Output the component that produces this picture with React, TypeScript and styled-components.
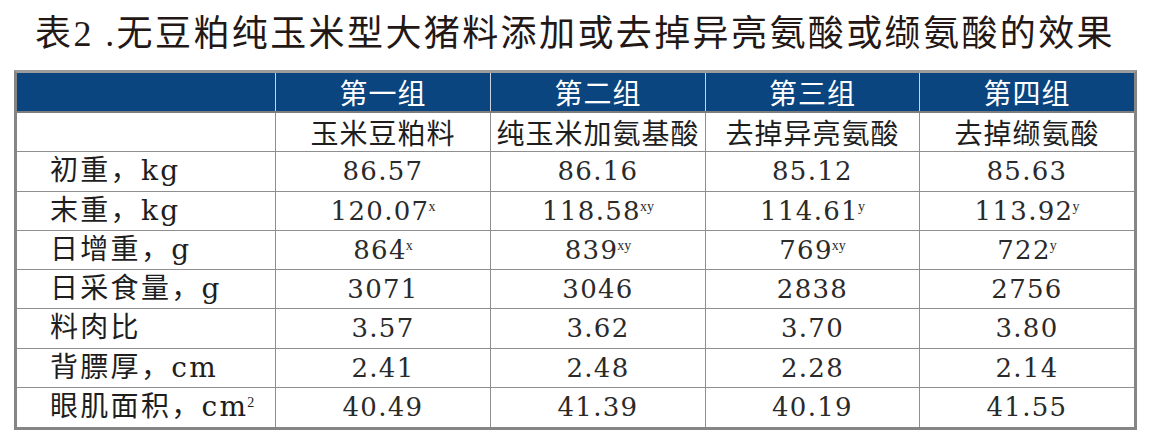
import React from 'react'
import styled, { createGlobalStyle } from 'styled-components'

const GlobalStyle = createGlobalStyle`
  html, body {
    margin: 0;
    padding: 0;
    background: #ffffff;
  }
  body {
    width: 1151px;
    height: 443px;
    overflow: hidden;
  }
`

const COLS = '259px 215px 215px 214px 214px'

const Page = styled.div`
  display: flex;
  flex-direction: column;
  align-items: flex-start;
  padding: 14px 0 0 14px;
`

const Title = styled.h1`
  margin: 0 0 16px 21px;
  font-family: 'Liberation Serif', 'Noto Sans CJK SC', serif;
  font-size: 36px;
  font-weight: 400;
  line-height: 40px;
  letter-spacing: 2.4px;
  color: #231815;
  white-space: nowrap;
`

const Table = styled.div`
  display: flex;
  flex-direction: column;
  width: 1117px;
  border: 3px solid #858585;
  border-top-color: #9c9c9c;
`

const Row = styled.div<{ $head?: boolean; $last?: boolean }>`
  display: grid;
  grid-template-columns: ${COLS};
  box-sizing: border-box;
  height: ${(p) => (p.$head ? '40px' : '39.25px')};
  background: ${(p) => (p.$head ? '#0b4580' : '#ffffff')};
  border-bottom: ${(p) =>
    p.$head ? '2px solid #7d7d7d' : p.$last ? 'none' : '1px solid #8f8f8f'};
`

const Cell = styled.div<{ $head?: boolean; $left?: boolean }>`
  display: flex;
  align-items: center;
  justify-content: ${(p) => (p.$left ? 'flex-start' : 'center')};
  padding-left: ${(p) => (p.$left ? '33px' : '0')};
  border-right: 1px solid ${(p) => (p.$head ? '#c9d2de' : '#8f8f8f')};
  color: ${(p) => (p.$head ? '#ffffff' : '#1e1e1e')};
  white-space: nowrap;
  &:last-child {
    border-right: none;
  }
`

const HeadText = styled.span`
  font-family: 'Noto Sans CJK SC', sans-serif;
  font-size: 28px;
  line-height: 1;
  letter-spacing: 1px;
`

const Label = styled.span`
  font-family: 'DejaVu Serif', 'Noto Sans CJK SC', serif;
  font-size: 28px;
  line-height: 1;
  letter-spacing: 2.3px;
`

const Value = styled.span`
  font-family: 'DejaVu Serif', serif;
  font-size: 26px;
  line-height: 1;
  letter-spacing: 1.3px;
  color: #2a2a2a;
`

const Sup = styled.sup`
  font-family: 'Liberation Serif', serif;
  font-size: 14px;
  line-height: 0;
  vertical-align: 9px;
  letter-spacing: 0;
  margin-left: -1px;
`

type Cellv = { v: string; s?: string }

const groups = ['第一组', '第二组', '第三组', '第四组']
const diets = ['玉米豆粕料', '纯玉米加氨基酸', '去掉异亮氨酸', '去掉缬氨酸']

const rows: { label: string; unit?: string; unitSup?: string; vals: Cellv[] }[] = [
  { label: '初重，', unit: 'kg', vals: [{ v: '86.57' }, { v: '86.16' }, { v: '85.12' }, { v: '85.63' }] },
  {
    label: '末重，',
    unit: 'kg',
    vals: [
      { v: '120.07', s: 'x' },
      { v: '118.58', s: 'xy' },
      { v: '114.61', s: 'y' },
      { v: '113.92', s: 'y' }
    ]
  },
  {
    label: '日增重，',
    unit: 'g',
    vals: [
      { v: '864', s: 'x' },
      { v: '839', s: 'xy' },
      { v: '769', s: 'xy' },
      { v: '722', s: 'y' }
    ]
  },
  { label: '日采食量，', unit: 'g', vals: [{ v: '3071' }, { v: '3046' }, { v: '2838' }, { v: '2756' }] },
  { label: '料肉比', vals: [{ v: '3.57' }, { v: '3.62' }, { v: '3.70' }, { v: '3.80' }] },
  { label: '背膘厚，', unit: 'cm', vals: [{ v: '2.41' }, { v: '2.48' }, { v: '2.28' }, { v: '2.14' }] },
  {
    label: '眼肌面积，',
    unit: 'cm',
    unitSup: '2',
    vals: [{ v: '40.49' }, { v: '41.39' }, { v: '40.19' }, { v: '41.55' }]
  }
]

export default function App() {
  return (
    <Page>
      <GlobalStyle />
      <Title>表2 .无豆粕纯玉米型大猪料添加或去掉异亮氨酸或缬氨酸的效果</Title>
      <Table>
        <Row $head>
          <Cell $head />
          {groups.map((g) => (
            <Cell $head key={g}>
              <HeadText>{g}</HeadText>
            </Cell>
          ))}
        </Row>
        <Row>
          <Cell />
          {diets.map((d) => (
            <Cell key={d}>
              <HeadText>{d}</HeadText>
            </Cell>
          ))}
        </Row>
        {rows.map((r, i) => (
          <Row key={r.label} $last={i === rows.length - 1}>
            <Cell $left>
              <Label>
                {r.label}
                {r.unit}
                {r.unitSup && <Sup>{r.unitSup}</Sup>}
              </Label>
            </Cell>
            {r.vals.map((c, j) => (
              <Cell key={j}>
                <Value>
                  {c.v}
                  {c.s && <Sup>{c.s}</Sup>}
                </Value>
              </Cell>
            ))}
          </Row>
        ))}
      </Table>
    </Page>
  )
}
